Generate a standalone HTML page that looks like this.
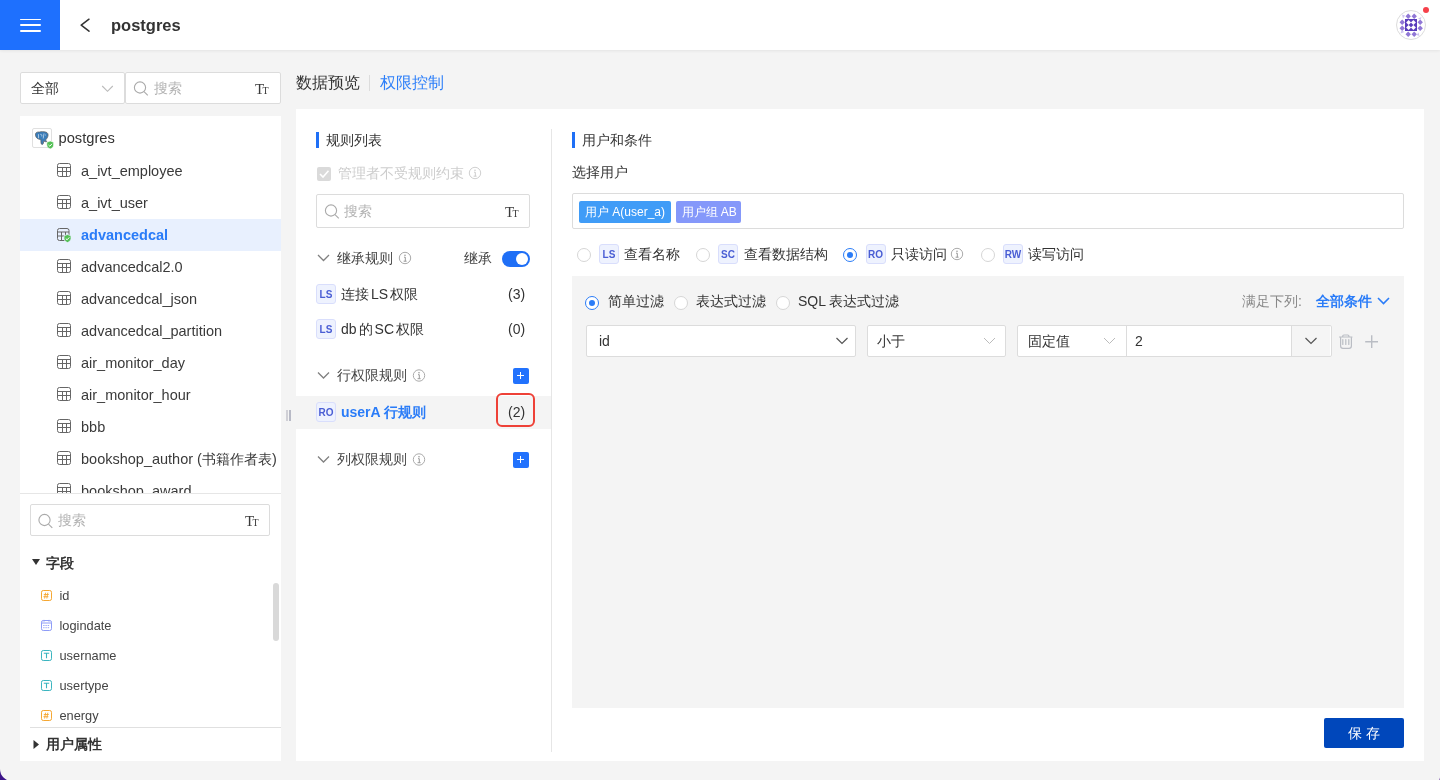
<!DOCTYPE html>
<html><head><meta charset="utf-8">
<style>
*{box-sizing:border-box;margin:0;padding:0}
html,body{width:1440px;height:780px;overflow:hidden}
body{position:relative;background:#f4f4f4;font-family:"Liberation Sans",sans-serif;color:#333;font-size:14px}
.a{position:absolute}
.t{position:absolute;white-space:nowrap;line-height:1}
svg{position:absolute;overflow:visible}
#hdr{left:0;top:0;width:1440px;height:50px;background:#fff;box-shadow:0 1px 3px rgba(0,0,0,.07)}
.box{position:absolute;background:#fff;border:1px solid #dcdcdc;border-radius:2px}
.panel{position:absolute;background:#fff}
.row{position:absolute;height:32px;line-height:32px;white-space:nowrap;padding-top:1px}
.badge{position:absolute;width:20px;height:20px;border:1px solid #d9defc;background:#eef2fe;border-radius:3px;color:#4a5ed4;font-weight:700;font-size:10px;line-height:20px;text-align:center;letter-spacing:0}
.radio{position:absolute;margin-top:.6px;width:14px;height:14px;border:1px solid #d6d6d6;border-radius:50%;background:#fff}
.radio.on{border-color:#2a7cf7}
.radio.on:after{content:"";position:absolute;left:3px;top:3px;width:6px;height:6px;border-radius:50%;background:#2a7cf7}
.plus{position:absolute;margin:.5px 0 0 .5px;width:16px;height:16px;background:#2272fd;border-radius:2px}
.plus:before{content:"";position:absolute;left:4.5px;top:7.5px;width:7px;height:1px;background:#fff}
.plus:after{content:"";position:absolute;left:7.5px;top:4.5px;width:1px;height:7px;background:#fff}
</style></head><body><div style="position:absolute;left:0;top:0;width:1440px;height:780px;will-change:transform">

<!-- header -->
<div id="hdr" class="a"></div>
<div class="a" style="left:0;top:0;width:60px;height:50px;background:#1e70fe"></div>
<div class="a" style="left:19.5px;top:18.6px;width:21.5px;height:1.7px;background:#fff;border-radius:1px"></div>
<div class="a" style="left:19.5px;top:24.4px;width:21.5px;height:1.7px;background:#fff;border-radius:1px"></div>
<div class="a" style="left:19.5px;top:30.2px;width:21.5px;height:1.7px;background:#fff;border-radius:1px"></div>
<svg style="left:0;top:0" width="1" height="1"><path d="M89 19.2 L81.2 25.2 L89 31.2" fill="none" stroke="#333" stroke-width="1.5" stroke-linecap="round" stroke-linejoin="round"/></svg>
<div class="t" style="left:111px;top:17px;font-size:16.5px;font-weight:700;color:#333">postgres</div>


<!-- avatar -->
<div class="a" style="left:1396px;top:10px;width:30px;height:30px;border-radius:50%;border:1px solid #dcdcdc;background:#fff;overflow:hidden">
<svg style="left:0;top:0" width="28" height="28" viewBox="0 0 28 28"><path d="M11.2 2.5 L13.899999999999999 5.2 L11.2 7.9 L8.5 5.2Z" fill="#9077d6"/><path d="M17.2 2.5 L19.9 5.2 L17.2 7.9 L14.5 5.2Z" fill="#9077d6"/><path d="M11.2 20.5 L13.899999999999999 23.2 L11.2 25.9 L8.5 23.2Z" fill="#9077d6"/><path d="M17.2 20.5 L19.9 23.2 L17.2 25.9 L14.5 23.2Z" fill="#9077d6"/><path d="M5.2 8.5 L7.9 11.2 L5.2 13.899999999999999 L2.5 11.2Z" fill="#9077d6"/><path d="M5.2 14.5 L7.9 17.2 L5.2 19.9 L2.5 17.2Z" fill="#9077d6"/><path d="M23.2 8.5 L25.9 11.2 L23.2 13.899999999999999 L20.5 11.2Z" fill="#9077d6"/><path d="M23.2 14.5 L25.9 17.2 L23.2 19.9 L20.5 17.2Z" fill="#9077d6"/><g fill="#cdc2f0"><path d="M5 3.5 L8 4.5 L6 7.5Z"/><path d="M24.5 6 L23.5 9 L21 7.5Z"/><path d="M3.5 22.5 L4.5 19.5 L7.5 21Z"/><path d="M22.5 25 L19.5 24 L21.5 21.5Z"/></g><rect x="8" y="8" width="12" height="12" fill="#5a3cbc"/><path d="M11.6 9.1 L14.1 11.6 L11.6 14.1 L9.1 11.6Z" fill="#fff"/><path d="M16.4 9.1 L18.9 11.6 L16.4 14.1 L13.899999999999999 11.6Z" fill="#fff"/><path d="M11.6 13.899999999999999 L14.1 16.4 L11.6 18.9 L9.1 16.4Z" fill="#fff"/><path d="M16.4 13.899999999999999 L18.9 16.4 L16.4 18.9 L13.899999999999999 16.4Z" fill="#fff"/><path d="M14 13.0 L15.0 14 L14 15.0 L13.0 14Z" fill="#5a3cbc"/></svg></div>
<div class="a" style="left:1423px;top:7px;width:6px;height:6px;border-radius:50%;background:#f6404a"></div>

<!-- left top controls -->
<div class="box" style="left:20px;top:72px;width:105px;height:32px"></div>
<div class="t" style="left:31px;top:81px;font-size:14px;color:#333">全部</div>
<svg style="left:0;top:0" width="1" height="1"><path d="M102.2 86 L107.5 91.3 L112.8 86" fill="none" stroke="#bbb" stroke-width="1.15"/></svg>
<div class="box" style="left:125px;top:72px;width:156px;height:32px"></div>
<svg style="left:0;top:0" width="1" height="1"><circle cx="140" cy="87.5" r="5.6" fill="none" stroke="#aaa" stroke-width="1.1"/><path d="M144 91.6 L147.8 95.4" stroke="#aaa" stroke-width="1.1"/></svg>
<div class="t" style="left:154px;top:81px;font-size:14px;color:#b3b3b3">搜索</div>
<div class="t" style="left:255px;top:82.0px;font-family:'Liberation Serif',serif;color:#3a3a3a"><span style="font-size:15px">T</span><span style="font-size:10px;margin-left:-1.6px">T</span></div>

<!-- tree panel -->
<div class="panel" style="left:20px;top:116px;width:261px;height:377px;overflow:hidden">
 <div class="a" style="left:0;top:103px;width:261px;height:32px;background:#e8f0fe"></div>
 <div class="a" style="left:12px;top:12px;width:20px;height:20px;border:1px solid #e0e0e0;border-radius:2px;background:#fff"></div>
<svg style="left:0;top:0" width="1" height="1"><path d="M15.5 19.5 C15 16.5 17 15.8 19.5 16 C21 15.5 23.5 15.5 25.5 16 C28 16.5 28.5 18.5 27.8 20.5 C27.3 22 26.5 23 25.5 24 L26.8 25.5 C25.5 26 24.5 25.5 23.8 25 L23.3 27.5 C22.8 29 21.2 28.8 21 27 L20.8 23.5 C19 23.5 16 22.5 15.5 19.5Z" fill="#3b7db9" stroke="#5a5a5a" stroke-width=".7"/><path d="M18.5 18.2 V22.3 M20.3 18.4 C21.5 18 22 19 21.8 20.5 M24 17.5 L23.2 22.5 M25.2 19 H26" fill="none" stroke="#d8e6f3" stroke-width=".7"/></svg>
<svg style="left:0;top:0" width="1" height="1"><path d="M30.2 25 L33.6 26.3 L33.6 28.9 C33.6 30.9 32.2 32.2 30.2 32.9 C28.2 32.2 26.8 30.9 26.8 28.9 L26.8 26.3Z" fill="#52c054" stroke="#fff" stroke-width=".6"/><path d="M28.5 29 L29.8 30.2 L32 27.8" fill="none" stroke="#fff" stroke-width="1"/></svg>
<div class="row" style="left:38.5px;top:5px;font-size:14.7px;color:#333">postgres</div>
<svg style="left:0;top:0" width="1" height="1"><g fill="none" stroke="#666" stroke-width="1"><rect x="37.5" y="47.5" width="13" height="13" rx="2"/><path d="M37.5 51.5 H50.5 M37.5 55.5 H50.5 M42.5 51.5 V60.5 M46.5 51.5 V60.5"/></g></svg><div class="row" style="left:61px;top:38px;font-size:14.5px;color:#3a3a3a">a_ivt_employee</div>
<svg style="left:0;top:0" width="1" height="1"><g fill="none" stroke="#666" stroke-width="1"><rect x="37.5" y="79.5" width="13" height="13" rx="2"/><path d="M37.5 83.5 H50.5 M37.5 87.5 H50.5 M42.5 83.5 V92.5 M46.5 83.5 V92.5"/></g></svg><div class="row" style="left:61px;top:70px;font-size:14.5px;color:#3a3a3a">a_ivt_user</div>
<svg style="left:0;top:1px" width="1" height="1"><g fill="none" stroke="#666" stroke-width="1"><rect x="37.5" y="111.5" width="11.5" height="12" rx="2"/><path d="M37.5 115 H49 M37.5 119 H49 M41.5 115 V123.5 M45.5 115 V123.5"/></g>
<path d="M47.5 117.5 L51 118.8 L51 121.5 C51 123.5 49.5 124.8 47.5 125.5 C45.5 124.8 44 123.5 44 121.5 L44 118.8Z" fill="#52c054" stroke="#e8f0fe" stroke-width=".8"/><path d="M45.8 121.6 L47.1 122.8 L49.3 120.4" fill="none" stroke="#fff" stroke-width="1"/></svg>
<div class="row" style="left:61px;top:102px;font-size:14.5px;font-weight:700;color:#2a7cf8">advancedcal</div>
<svg style="left:0;top:0" width="1" height="1"><g fill="none" stroke="#666" stroke-width="1"><rect x="37.5" y="143.5" width="13" height="13" rx="2"/><path d="M37.5 147.5 H50.5 M37.5 151.5 H50.5 M42.5 147.5 V156.5 M46.5 147.5 V156.5"/></g></svg><div class="row" style="left:61px;top:134px;font-size:14.5px;color:#3a3a3a">advancedcal2.0</div>
<svg style="left:0;top:0" width="1" height="1"><g fill="none" stroke="#666" stroke-width="1"><rect x="37.5" y="175.5" width="13" height="13" rx="2"/><path d="M37.5 179.5 H50.5 M37.5 183.5 H50.5 M42.5 179.5 V188.5 M46.5 179.5 V188.5"/></g></svg><div class="row" style="left:61px;top:166px;font-size:14.5px;color:#3a3a3a">advancedcal_json</div>
<svg style="left:0;top:0" width="1" height="1"><g fill="none" stroke="#666" stroke-width="1"><rect x="37.5" y="207.5" width="13" height="13" rx="2"/><path d="M37.5 211.5 H50.5 M37.5 215.5 H50.5 M42.5 211.5 V220.5 M46.5 211.5 V220.5"/></g></svg><div class="row" style="left:61px;top:198px;font-size:14.5px;color:#3a3a3a">advancedcal_partition</div>
<svg style="left:0;top:0" width="1" height="1"><g fill="none" stroke="#666" stroke-width="1"><rect x="37.5" y="239.5" width="13" height="13" rx="2"/><path d="M37.5 243.5 H50.5 M37.5 247.5 H50.5 M42.5 243.5 V252.5 M46.5 243.5 V252.5"/></g></svg><div class="row" style="left:61px;top:230px;font-size:14.5px;color:#3a3a3a">air_monitor_day</div>
<svg style="left:0;top:0" width="1" height="1"><g fill="none" stroke="#666" stroke-width="1"><rect x="37.5" y="271.5" width="13" height="13" rx="2"/><path d="M37.5 275.5 H50.5 M37.5 279.5 H50.5 M42.5 275.5 V284.5 M46.5 275.5 V284.5"/></g></svg><div class="row" style="left:61px;top:262px;font-size:14.5px;color:#3a3a3a">air_monitor_hour</div>
<svg style="left:0;top:0" width="1" height="1"><g fill="none" stroke="#666" stroke-width="1"><rect x="37.5" y="303.5" width="13" height="13" rx="2"/><path d="M37.5 307.5 H50.5 M37.5 311.5 H50.5 M42.5 307.5 V316.5 M46.5 307.5 V316.5"/></g></svg><div class="row" style="left:61px;top:294px;font-size:14.5px;color:#3a3a3a">bbb</div>
<svg style="left:0;top:0" width="1" height="1"><g fill="none" stroke="#666" stroke-width="1"><rect x="37.5" y="335.5" width="13" height="13" rx="2"/><path d="M37.5 339.5 H50.5 M37.5 343.5 H50.5 M42.5 339.5 V348.5 M46.5 339.5 V348.5"/></g></svg><div class="row" style="left:61px;top:326px;font-size:14.5px;color:#3a3a3a">bookshop_author (<span style="font-size:14px">书籍作者表</span>)</div>
<svg style="left:0;top:0" width="1" height="1"><g fill="none" stroke="#666" stroke-width="1"><rect x="37.5" y="367.5" width="13" height="13" rx="2"/><path d="M37.5 371.5 H50.5 M37.5 375.5 H50.5 M42.5 371.5 V380.5 M46.5 371.5 V380.5"/></g></svg><div class="row" style="left:61px;top:358px;font-size:14.5px;color:#3a3a3a">bookshop_award</div>
</div>
<div class="a" style="left:20px;top:493px;width:261px;height:1px;background:#e6e6e6"></div>

<!-- fields panel -->
<div class="panel" style="left:20px;top:494px;width:261px;height:267px">
 <div class="box" style="left:10px;top:10px;width:240px;height:32px"></div>
 <svg style="left:0;top:0" width="1" height="1"><circle cx="24.5" cy="26" r="5.6" fill="none" stroke="#aaa" stroke-width="1.1"/><path d="M28.5 30.1 L32.3 33.9" stroke="#aaa" stroke-width="1.1"/></svg>
 <div class="t" style="left:38px;top:19px;font-size:14px;color:#b3b3b3">搜索</div>
 <div class="t" style="left:225px;top:20.0px;font-family:'Liberation Serif',serif;color:#3a3a3a"><span style="font-size:15px">T</span><span style="font-size:10px;margin-left:-1.6px">T</span></div>
 <svg style="left:0;top:0" width="1" height="1"><path d="M12 65 L20 65 L16 71Z" fill="#333"/></svg>
 <div class="t" style="left:26px;top:62px;font-size:14px;font-weight:700;color:#333">字段</div>
 <svg style="left:0;top:0" width="1" height="1"><rect x="21.5" y="96.5" width="10" height="10" rx="1.8" fill="#fff" stroke="#f5a733" stroke-width="1"/><path d="M25.6 98.7 L24.6 104.5 M27.8 98.7 L26.8 104.5 M23.8 100.5 H28.8 M23.4 102.7 H28.4" stroke="#f5a733" stroke-width=".9"/></svg><div class="t" style="left:39.5px;top:95.5px;font-size:12.8px;color:#444">id</div>
<svg style="left:0;top:0" width="1" height="1"><rect x="21.5" y="126.5" width="10" height="10" rx="1.8" fill="#fff" stroke="#8e9cf7" stroke-width="1"/><path d="M21.5 129.0 H31.5 M24 125.9 V127.7 M29 125.9 V127.7" stroke="#8e9cf7" stroke-width="1"/><path d="M23.3 131.5 H30 M23.3 133.7 H30" stroke="#8e9cf7" stroke-width="1" stroke-dasharray="1.2 1"/></svg><div class="t" style="left:39.5px;top:125.5px;font-size:12.8px;color:#444">logindate</div>
<svg style="left:0;top:0" width="1" height="1"><rect x="21.5" y="156.5" width="10" height="10" rx="1.8" fill="#fff" stroke="#3bb5c0" stroke-width="1"/><path d="M23.8 159.2 H29.2 M26.5 159.2 V164.3" stroke="#3bb5c0" stroke-width="1.1"/></svg><div class="t" style="left:39.5px;top:155.5px;font-size:12.8px;color:#444">username</div>
<svg style="left:0;top:0" width="1" height="1"><rect x="21.5" y="186.5" width="10" height="10" rx="1.8" fill="#fff" stroke="#3bb5c0" stroke-width="1"/><path d="M23.8 189.2 H29.2 M26.5 189.2 V194.3" stroke="#3bb5c0" stroke-width="1.1"/></svg><div class="t" style="left:39.5px;top:185.5px;font-size:12.8px;color:#444">usertype</div>
<svg style="left:0;top:0" width="1" height="1"><rect x="21.5" y="216.5" width="10" height="10" rx="1.8" fill="#fff" stroke="#f5a733" stroke-width="1"/><path d="M25.6 218.7 L24.6 224.5 M27.8 218.7 L26.8 224.5 M23.8 220.5 H28.8 M23.4 222.7 H28.4" stroke="#f5a733" stroke-width=".9"/></svg><div class="t" style="left:39.5px;top:215.5px;font-size:12.8px;color:#444">energy</div>
 <div class="a" style="left:253px;top:89px;width:6px;height:58px;border-radius:3px;background:#d9d9d9"></div>
 <div class="a" style="left:10px;top:233px;width:251px;height:1px;background:#e0e0e0"></div>
 <svg style="left:0;top:0" width="1" height="1"><path d="M13.5 246 L19 250.5 L13.5 255Z" fill="#333"/></svg>
 <div class="t" style="left:26px;top:243px;font-size:14px;font-weight:700;color:#333">用户属性</div>
</div>


<!-- tabs -->
<div class="t" style="left:296px;top:75px;font-size:16px;color:#333">数据预览</div>
<div class="a" style="left:369px;top:75px;width:1px;height:16px;background:#dcdcdc"></div>
<div class="t" style="left:380px;top:75px;font-size:16px;color:#2d7ff9">权限控制</div>

<!-- main panel -->
<div class="panel" style="left:296px;top:109px;width:1128px;height:652px"></div>
<div class="a" style="left:286px;top:410px;width:2px;height:11px;background:#d0d0d6"></div>
<div class="a" style="left:289px;top:410px;width:1.5px;height:11px;background:#b8bac6"></div>

<!-- middle column -->
<div class="a" style="left:316px;top:132px;width:3px;height:16px;background:#1f6ff6"></div>
<div class="t" style="left:326px;top:133px;font-size:14px;color:#333">规则列表</div>
<div class="a" style="left:317px;top:166.5px;width:14px;height:14px;border-radius:2px;background:#dadada"></div>
<svg style="left:0;top:0" width="1" height="1"><path d="M320 174 L323 177 L328.5 170.8" fill="none" stroke="#fff" stroke-width="1.6"/></svg>
<div class="t" style="left:338px;top:166px;font-size:14px;color:#cdcdcd">管理者不受规则约束</div>
<svg style="left:0;top:0" width="1" height="1"><circle cx="475" cy="173" r="5.7" fill="none" stroke="#d0d0d0" stroke-width="1"/><circle cx="475" cy="170.3" r=".8" fill="#ccc"/><path d="M474 172.2 H475.3 V176.2 M473.6 176.2 H476.6" fill="none" stroke="#ccc" stroke-width="1"/></svg>
<div class="box" style="left:316px;top:194px;width:214px;height:34px"></div>
<svg style="left:0;top:0" width="1" height="1"><circle cx="331" cy="210.5" r="5.6" fill="none" stroke="#aaa" stroke-width="1.1"/><path d="M335 214.6 L338.8 218.4" stroke="#aaa" stroke-width="1.1"/></svg>
<div class="t" style="left:344px;top:204px;font-size:14px;color:#b3b3b3">搜索</div>
<div class="t" style="left:505px;top:205.0px;font-family:'Liberation Serif',serif;color:#3a3a3a"><span style="font-size:15px">T</span><span style="font-size:10px;margin-left:-1.6px">T</span></div>

<svg style="left:0;top:0" width="1" height="1"><path d="M318 255 L323.5 260.5 L329 255" fill="none" stroke="#808080" stroke-width="1.3"/></svg>
<div class="t" style="left:337px;top:251px;font-size:14px;color:#444">继承规则</div>
<svg style="left:0;top:0" width="1" height="1"><circle cx="405" cy="258" r="5.7" fill="none" stroke="#aaa" stroke-width="1"/><circle cx="405" cy="255.3" r=".8" fill="#999"/><path d="M404 257.2 H405.3 V261.2 M403.6 261.2 H406.6" fill="none" stroke="#999" stroke-width="1"/></svg>
<div class="t" style="left:464px;top:251px;font-size:14px;color:#444">继承</div>
<div class="a" style="left:502px;top:251px;width:28px;height:16px;border-radius:8px;background:#1f6ff6"></div>
<div class="a" style="left:516px;top:253px;width:12px;height:12px;border-radius:50%;background:#fff"></div>

<div class="badge" style="left:316px;top:284px">LS</div>
<div class="t" style="left:341px;top:287px;font-size:14px;color:#333">连接<span style="margin:0 2px">LS</span>权限</div>
<div class="t" style="left:508px;top:287px;font-size:14px;color:#333">(3)</div>
<div class="badge" style="left:316px;top:319px">LS</div>
<div class="t" style="left:341px;top:322px;font-size:14px;color:#333">db<span style="margin:0 2px">的</span>SC<span style="margin-left:2px">权限</span></div>
<div class="t" style="left:508px;top:322px;font-size:14px;color:#333">(0)</div>

<svg style="left:0;top:0" width="1" height="1"><path d="M318 372.5 L323.5 378 L329 372.5" fill="none" stroke="#808080" stroke-width="1.3"/></svg>
<div class="t" style="left:337px;top:368px;font-size:14px;color:#444">行权限规则</div>
<svg style="left:0;top:0" width="1" height="1"><circle cx="419" cy="375.5" r="5.7" fill="none" stroke="#aaa" stroke-width="1"/><circle cx="419" cy="372.8" r=".8" fill="#999"/><path d="M418 374.7 H419.3 V378.7 M417.6 378.7 H420.6" fill="none" stroke="#999" stroke-width="1"/></svg>
<div class="plus" style="left:512px;top:367px"></div>

<div class="a" style="left:296px;top:396px;width:255px;height:33px;background:#f4f4f4"></div>
<div class="badge" style="left:316px;top:402px">RO</div>
<div class="t" style="left:341px;top:405px;font-size:14px;font-weight:700;color:#2a7cf8">userA 行规则</div>
<div class="t" style="left:508px;top:405px;font-size:14px;color:#333">(2)</div>
<div class="a" style="left:496px;top:393px;width:38.5px;height:33.5px;border:2.6px solid #ee4137;border-radius:6px"></div>

<svg style="left:0;top:0" width="1" height="1"><path d="M318 456.5 L323.5 462 L329 456.5" fill="none" stroke="#808080" stroke-width="1.3"/></svg>
<div class="t" style="left:337px;top:452px;font-size:14px;color:#444">列权限规则</div>
<svg style="left:0;top:0" width="1" height="1"><circle cx="419" cy="459.5" r="5.7" fill="none" stroke="#aaa" stroke-width="1"/><circle cx="419" cy="456.8" r=".8" fill="#999"/><path d="M418 458.7 H419.3 V462.7 M417.6 462.7 H420.6" fill="none" stroke="#999" stroke-width="1"/></svg>
<div class="plus" style="left:512px;top:451px"></div>

<div class="a" style="left:551px;top:129px;width:1px;height:623px;background:#e6e6e6"></div>

<!-- right column -->
<div class="a" style="left:572px;top:132px;width:3px;height:16px;background:#1f6ff6"></div>
<div class="t" style="left:582px;top:133px;font-size:14px;color:#333">用户和条件</div>
<div class="t" style="left:572px;top:165px;font-size:14px;color:#333">选择用户</div>
<div class="box" style="left:572px;top:193px;width:832px;height:36px"></div>
<div class="a" style="left:579px;top:200.5px;width:92px;height:22px;border-radius:2px;background:#409cf7;color:#fff;font-size:12px;line-height:22px;padding-left:6px;white-space:nowrap">用户 A(user_a)</div>
<div class="a" style="left:675.5px;top:200.5px;width:65.5px;height:22px;border-radius:2px;background:#8598fa;color:#fff;font-size:12px;line-height:22px;padding-left:6px;white-space:nowrap">用户组 AB</div>

<div class="radio" style="left:577px;top:247px"></div>
<div class="badge" style="left:599px;top:244px">LS</div>
<div class="t" style="left:624px;top:247px;font-size:14px;color:#333">查看名称</div>
<div class="radio" style="left:696px;top:247px"></div>
<div class="badge" style="left:718px;top:244px">SC</div>
<div class="t" style="left:744px;top:247px;font-size:14px;color:#333">查看数据结构</div>
<div class="radio on" style="left:843px;top:247px"></div>
<div class="badge" style="left:865.5px;top:244px">RO</div>
<div class="t" style="left:891px;top:247px;font-size:14px;color:#333">只读访问</div>
<svg style="left:0;top:0" width="1" height="1"><circle cx="957" cy="254" r="5.7" fill="none" stroke="#aaa" stroke-width="1"/><circle cx="957" cy="251.3" r=".8" fill="#999"/><path d="M956 253.2 H957.3 V257.2 M955.6 257.2 H958.6" fill="none" stroke="#999" stroke-width="1"/></svg>
<div class="radio" style="left:981px;top:247px"></div>
<div class="badge" style="left:1003px;top:244px">RW</div>
<div class="t" style="left:1028px;top:247px;font-size:14px;color:#333">读写访问</div>

<div class="a" style="left:572px;top:276px;width:832px;height:432px;background:#f4f4f4"></div>
<div class="radio on" style="left:585px;top:295px"></div>
<div class="t" style="left:608px;top:294px;font-size:14px;color:#333">简单过滤</div>
<div class="radio" style="left:674px;top:295px"></div>
<div class="t" style="left:696px;top:294px;font-size:14px;color:#333">表达式过滤</div>
<div class="radio" style="left:776px;top:295px"></div>
<div class="t" style="left:798px;top:294px;font-size:14px;color:#333">SQL 表达式过滤</div>
<div class="t" style="left:1242px;top:294px;font-size:14px;color:#888">满足下列:</div>
<div class="t" style="left:1316px;top:294px;font-size:14px;font-weight:700;color:#2a7cf8">全部条件</div>
<svg style="left:0;top:0" width="1" height="1"><path d="M1378 298 L1383.5 303.5 L1389 298" fill="none" stroke="#2a7cf8" stroke-width="1.6"/></svg>

<div class="box" style="left:586px;top:325px;width:270px;height:32px"></div>
<div class="t" style="left:599px;top:334px;font-size:14px;color:#333">id</div>
<svg style="left:0;top:0" width="1" height="1"><path d="M836.5 338 L842 343.5 L847.5 338" fill="none" stroke="#555" stroke-width="1.2"/></svg>
<div class="box" style="left:867px;top:325px;width:139px;height:32px"></div>
<div class="t" style="left:877px;top:334px;font-size:14px;color:#333">小于</div>
<svg style="left:0;top:0" width="1" height="1"><path d="M984 338 L989.5 343.5 L995 338" fill="none" stroke="#bbb" stroke-width="1"/></svg>
<div class="box" style="left:1017px;top:325px;width:315px;height:32px"></div>
<div class="a" style="left:1126px;top:326px;width:1px;height:30px;background:#dcdcdc"></div>
<div class="a" style="left:1291px;top:326px;width:39px;height:30px;background:#f5f5f5;border-left:1px solid #dcdcdc"></div>
<div class="t" style="left:1028px;top:334px;font-size:14px;color:#333">固定值</div>
<svg style="left:0;top:0" width="1" height="1"><path d="M1104 338 L1109.5 343.5 L1115 338" fill="none" stroke="#bbb" stroke-width="1"/></svg>
<div class="t" style="left:1135px;top:334px;font-size:14px;color:#333">2</div>
<svg style="left:0;top:0" width="1" height="1"><path d="M1305.5 338 L1311 343.5 L1316.5 338" fill="none" stroke="#555" stroke-width="1.2"/></svg>
<svg style="left:0;top:0" width="1" height="1"><g fill="none" stroke="#babdc4" stroke-width="1.2" stroke-linecap="round"><path d="M1339.5 337 H1352 M1342.6 336.8 C1342.6 335.2 1343 335 1344 335 H1347.6 C1348.6 335 1349 335.2 1349 336.8"/><path d="M1340.6 337.5 V346 C1340.6 347.6 1341.5 348.3 1343 348.3 H1349 C1350.5 348.3 1351.4 347.6 1351.4 346 V337.5"/><path d="M1342.8 339.6 V344.5 M1345.8 339.6 V344.5 M1348.8 339.6 V344.5"/></g></svg>
<svg style="left:0;top:0" width="1" height="1"><path d="M1365.2 341.7 H1378 M1371.7 335.2 V347.9" stroke="#babdc4" stroke-width="1.4"/></svg>

<div class="a" style="left:1324px;top:718px;width:80px;height:30px;border-radius:2px;background:#0047bb;color:#fff;font-size:14px;line-height:30px;text-align:center;letter-spacing:4px;padding-left:4px">保存</div>

<!-- window corners -->
<svg style="left:0;top:0" width="1" height="1"><path d="M0 769 A12 12 0 0 0 12 781 L0 781Z" fill="#3c1488"/><path d="M1440 777.5 A3 3 0 0 1 1437.5 780.5 L1440 780.5Z" fill="#6a3aa0"/></svg>
</div></body></html>
